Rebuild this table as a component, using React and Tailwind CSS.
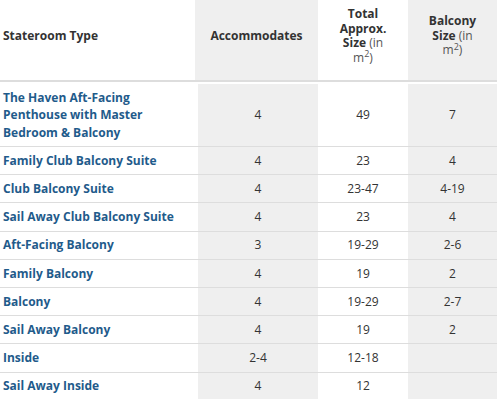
const rows = [
  { type: 'The Haven Aft-Facing Penthouse with Master Bedroom & Balcony', acc: '4', total: '49', balcony: '7' },
  { type: 'Family Club Balcony Suite', acc: '4', total: '23', balcony: '4' },
  { type: 'Club Balcony Suite', acc: '4', total: '23-47', balcony: '4-19' },
  { type: 'Sail Away Club Balcony Suite', acc: '4', total: '23', balcony: '4' },
  { type: 'Aft-Facing Balcony', acc: '3', total: '19-29', balcony: '2-6' },
  { type: 'Family Balcony', acc: '4', total: '19', balcony: '2' },
  { type: 'Balcony', acc: '4', total: '19-29', balcony: '2-7' },
  { type: 'Sail Away Balcony', acc: '4', total: '19', balcony: '2' },
  { type: 'Inside', acc: '2-4', total: '12-18', balcony: '' },
  { type: 'Sail Away Inside', acc: '4', total: '12', balcony: '' },
];

const SizeUnit = () => (
  <span className="font-normal text-[#555]">
    (in m<sup>2</sup>)
  </span>
);

export default function App() {
  return (
    <div className="w-[497px] h-[399px] overflow-hidden bg-white text-[12px] text-[#333]" style={{ fontFamily: '"Open Sans", sans-serif' }}>
      <div className="grid grid-cols-[195px_123px_90px_1fr] h-[82px] border-b-2 border-[#dddddd] font-bold leading-[14.5px]">
        <div className="flex items-center pl-[3px] pb-2">Stateroom Type</div>
        <div className="flex items-center justify-center bg-[#efefef] pb-2 text-center">Accommodates</div>
        <div className="flex items-center justify-center px-4 pb-2 text-center">
          <span>Total Approx. Size <SizeUnit /></span>
        </div>
        <div className="flex items-center justify-center bg-[#efefef] px-4 pb-2 text-center">
          <span>Balcony Size <SizeUnit /></span>
        </div>
      </div>
      <div className="pt-[2px]">
        {rows.map((r) => (
          <div key={r.type} className="grid grid-cols-[198px_120px_90px_1fr] border-b border-[#dddddd] leading-[17.4px]">
            <div className="flex items-center py-[4.9px] pl-[3px] pr-2 font-bold text-[#1f5b8b]">
              <span className="max-w-[180px]">{r.type}</span>
            </div>
            <div className="flex items-center justify-center bg-[#efefef]">{r.acc}</div>
            <div className="flex items-center justify-center">{r.total}</div>
            <div className="flex items-center justify-center bg-[#efefef]">{r.balcony}</div>
          </div>
        ))}
      </div>
    </div>
  );
}
